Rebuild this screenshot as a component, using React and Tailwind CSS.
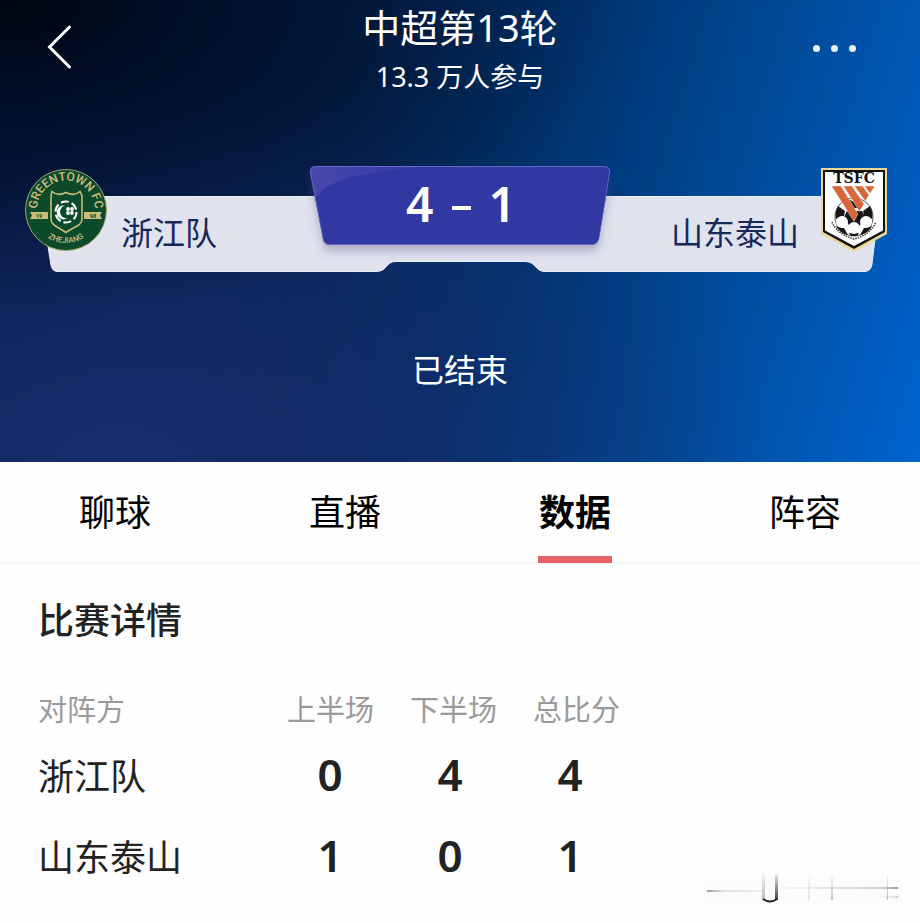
import React, { useState } from 'react';

const tabs = ['聊球', '直播', '数据', '阵容'];

const rows = [
    { team: '浙江队', scores: [0, 4, 4] },
    { team: '山东泰山', scores: [1, 0, 1] }
];

function GreentownCrest() {
    return (
        <svg className="w-[82px] h-[82px] shrink-0" viewBox="0 0 82 82" role="img" aria-label="Greentown FC">
            <defs>
                <path id="gt-top" d="M12.500 46 A29 29 0 1 1 69.500 46" />
                <path id="gt-bottom" d="M8 41 A33 33 0 0 0 74 41" />
            </defs>
            <circle cx="41" cy="41" r="40.5" fill="#0b4a2b" stroke="#a9a56c" strokeWidth="1" />
            <g fill="#cdbd7c" fontFamily="Roboto, sans-serif" fontWeight="500" textAnchor="middle">
                <text fontSize="12">
                    <textPath href="#gt-top" startOffset="50%">GREENTOWN FC</textPath>
                </text>
                <text fontSize="8">
                    <textPath href="#gt-bottom" startOffset="50%">ZHEJIANG</textPath>
                </text>
            </g>
            <path d="M5 43h18v7H5l2-3.500zM59 43h18l-2 3.500 2 3.500H59z" fill="#cdbd7c" />
            <g fill="#0b4a2b" fontFamily="Roboto, sans-serif" fontWeight="700" fontSize="5.500" textAnchor="middle">
                <text x="14" y="48.500">19</text>
                <text x="68" y="48.500">98</text>
            </g>
            <path
                d="M27 22.500C31 26 36 26 41 23.500C46 26 51 26 55 22.500L57 27V50C57 57 48 58 41 63.500C34 58 26 57 26 50V27Z"
                fill="#0b4a2b"
                stroke="#cdbd7c"
                strokeWidth="1.600"
            />
            <circle cx="41" cy="43" r="10.500" fill="none" stroke="#fff" strokeWidth="2" strokeDasharray="8 3" />
            <path d="M40 36.500a7 7 0 1 0 3 12.500a5.500 5.500 0 0 1-3-12.500z" fill="#fff" />
            <g fill="#fff">
                <circle cx="43" cy="40" r="1.900" />
                <circle cx="47" cy="40" r="1.900" />
                <circle cx="43" cy="44" r="1.900" />
                <circle cx="47" cy="44" r="1.900" />
            </g>
        </svg>
    );
}

function TaishanCrest() {
    return (
        <svg className="w-[66px] h-[84px] shrink-0" viewBox="0 0 66 84" role="img" aria-label="TSFC">
            <path d="M0 0H66V66L33 84L0 66Z" fill="#ecd894" />
            <path d="M2 2H64V64L33 81L2 64Z" fill="#111" />
            <path d="M4 4H62V62.500L33 78L4 62.500Z" fill="#fff" />
            <text
                x="33"
                y="15"
                fill="#111"
                fontFamily="'DejaVu Serif', serif"
                fontWeight="700"
                fontSize="14"
                textAnchor="middle"
            >
                TSFC
            </text>
            <circle cx="33" cy="49" r="19" fill="#fff" stroke="#222" strokeWidth="0.800" />
            <g fill="#161616">
                <path d="M26 43h15l4 8-7 7h-9l-7-7z" />
                <path d="M17 38l7 5-1 5-8 3c-1-5 0-9 2-13z" />
                <path d="M49 38l-7 5 1 5 8 3c1-5 0-9-2-13z" />
                <path d="M15 58l8 2 4 7c-6-1-10-5-12-9z" />
                <path d="M51 58l-8 2-4 7c6-1 10-5 12-9z" />
                <path d="M27 31l6 3 6-3-2 9h-8z" />
                <path d="M28 65h10l-2 3h-6z" />
            </g>
            <g fill="#fff">
                <circle cx="21" cy="54" r="6" />
                <circle cx="45" cy="54" r="6" />
                <circle cx="33" cy="60" r="6" />
            </g>
            <path d="M11 54Q16 66 33 71Q49 67 55 54" fill="none" stroke="#444" strokeWidth="1.600" strokeDasharray="1.500 1" />
            <g fill="#d9653a" stroke="#fff" strokeWidth="0.400">
                <path d="M10.500 18H20L37 46L33 53.500Z" />
                <path d="M22.500 18H31L43 36L38.500 43.500Z" />
                <path d="M33.500 18H41.500L48 27L44.300 33.300Z" />
                <path d="M43.500 18H54L49 25.500Z" />
            </g>
        </svg>
    );
}

function Scoreboard() {
    return (
        <div className="relative mt-[71px] flex h-[106px] justify-between pl-[25px] pr-[33px]">
            <svg className="absolute inset-0 h-full w-full" viewBox="0 0 920 106" preserveAspectRatio="none" aria-hidden="true">
                <defs>
                    <filter id="plate-shadow" x="-10%" y="-10%" width="120%" height="140%">
                        <feDropShadow dx="0" dy="6" stdDeviation="5" floodColor="#4a3f80" floodOpacity="0.350" />
                    </filter>
                    <clipPath id="plate-clip">
                        <path d="M316 0H604Q611 0 610 7L599 73Q597 79 591 79H330Q324 79 323 73L310 7Q309 0 316 0Z" />
                    </clipPath>
                    <linearGradient id="shine" x1="0" y1="0" x2="1" y2="0">
                        <stop offset="0" stopColor="#4a48ad" />
                        <stop offset="1" stopColor="#3138a2" />
                    </linearGradient>
                </defs>
                <path
                    d="M40 30.500H880L872 98Q871 105 865 105.500H545C535 105.500 536 95.500 525 95.500H396C385 95.500 388 105.500 376 105.500H57Q52 105 51 99Z"
                    fill="#e0e3ed"
                    stroke="#e8f1fb"
                />
                <path
                    d="M316 0H604Q611 0 610 7L599 73Q597 79 591 79H330Q324 79 323 73L310 7Q309 0 316 0Z"
                    fill="#3138a2"
                    filter="url(#plate-shadow)"
                />
                <g clipPath="url(#plate-clip)">
                    <path d="M300 0H440C360 6 330 12 316 32L300 40Z" fill="url(#shine)" />
                    <path
                        d="M316 0.500H604Q610.500 0.500 609.500 7L599 73Q597 78.500 591 78.500H330Q324 78.500 323 73L310.500 7Q309.500 0.500 316 0.500Z"
                        fill="none"
                        stroke="#6668c4"
                    />
                </g>
            </svg>
            <div className="relative flex flex-1 gap-[14px] pt-[3px]">
                <GreentownCrest />
                <span className="pt-[44px] text-[32px] leading-[40px] text-[#17285a]">浙江队</span>
            </div>
            <div className="absolute inset-x-0 top-0 flex h-[76px] items-center justify-center gap-[18px] pl-[2px] text-[48px] leading-[48px] font-semibold text-white">
                <span>4</span>
                <span className="mt-[8px] h-[4px] w-[19px] bg-white" />
                <span>1</span>
            </div>
            <div className="relative flex flex-1 justify-end gap-[22px] pt-[2px]">
                <span className="pt-[45px] text-[32px] leading-[40px] text-[#17285a]">山东泰山</span>
                <TaishanCrest />
            </div>
        </div>
    );
}

function Watermark() {
    return (
        <svg className="absolute right-[18px] bottom-[16px] h-[34px] w-[198px]" viewBox="0 0 198 34" aria-hidden="true">
            <defs>
                <linearGradient id="wm-fade" x1="0" y1="0" x2="0" y2="1">
                    <stop offset="0" stopColor="#222" stopOpacity="0.050" />
                    <stop offset="1" stopColor="#222" stopOpacity="0.850" />
                </linearGradient>
                <linearGradient id="wm-faint" x1="0" y1="0" x2="0" y2="1">
                    <stop offset="0" stopColor="#777" stopOpacity="0.050" />
                    <stop offset="1" stopColor="#777" stopOpacity="0.500" />
                </linearGradient>
                <linearGradient id="wm-left" x1="0" y1="0" x2="1" y2="0">
                    <stop offset="0" stopColor="#777" stopOpacity="0.700" />
                    <stop offset="0.300" stopColor="#777" stopOpacity="0.200" />
                    <stop offset="1" stopColor="#777" stopOpacity="0.100" />
                </linearGradient>
                <linearGradient id="wm-right" x1="0" y1="0" x2="1" y2="0">
                    <stop offset="0" stopColor="#777" stopOpacity="0.050" />
                    <stop offset="0.850" stopColor="#777" stopOpacity="0.300" />
                    <stop offset="1" stopColor="#777" stopOpacity="0.700" />
                </linearGradient>
            </defs>
            <rect x="0" y="2" width="198" height="30" fill="#fcfcfc" />
            <rect x="3" y="17" width="55" height="2" fill="url(#wm-left)" />
            <rect x="76" y="14" width="118" height="2" fill="url(#wm-right)" />
            <rect x="176" y="23" width="18" height="2" fill="url(#wm-right)" opacity="0.600" />
            <rect x="58" y="0" width="3" height="27" fill="url(#wm-faint)" />
            <rect x="71" y="0" width="3" height="27" fill="url(#wm-fade)" />
            <path d="M59 26Q66 31 73 26" fill="none" stroke="#222" strokeWidth="2" />
            <rect x="104" y="2" width="2" height="25" fill="url(#wm-faint)" opacity="0.350" />
            <rect x="127" y="2" width="2" height="25" fill="url(#wm-faint)" opacity="0.800" />
            <rect x="183" y="2" width="1" height="25" fill="url(#wm-faint)" />
        </svg>
    );
}

export default function App() {
    const [active, setActive] = useState('数据');

    return (
        <div className="relative min-h-screen bg-[#fefefe] font-['Noto_Sans','Noto_Sans_CJK_SC',sans-serif] text-[#222]">
            <header className="h-[462px] bg-[radial-gradient(ellipse_at_0%_0%,#000611_0%,#000b22b3_18%,transparent_48%),radial-gradient(ellipse_at_12%_100%,#182c6c_0%,#182c6c99_28%,transparent_58%),linear-gradient(107deg,#03163d_0%,#04234f_36%,#00326c_55%,#004a98_75%,#0057b4_88%,#0064d0_100%)] text-white">
                <div className="flex items-start justify-between px-[46px]">
                    <button aria-label="返回" className="mt-[24px] h-[46px] w-[62px]">
                        <svg className="h-[46px] w-[26px]" viewBox="0 0 26 46" fill="none" stroke="#fff" strokeWidth="3" strokeLinecap="round">
                            <path d="M23.500 3L3.500 23L23.500 43" />
                        </svg>
                    </button>
                    <div className="text-center">
                        <h1 className="pt-[3px] text-[38px] leading-[48px]">中超第13轮</h1>
                        <p className="mt-[8px] text-[27px] leading-[35px]">13.3 万人参与</p>
                    </div>
                    <button aria-label="更多" className="mt-[36px] flex h-[24px] w-[62px] items-center justify-end gap-[11px] pr-[18px]">
                        <span className="h-[7px] w-[7px] shrink-0 rounded-full bg-[#e2f5ff]" />
                        <span className="h-[7px] w-[7px] shrink-0 rounded-full bg-[#e2f5ff]" />
                        <span className="h-[7px] w-[7px] shrink-0 rounded-full bg-[#e2f5ff]" />
                    </button>
                </div>
                <div className="pt-px">
                    <Scoreboard />
                </div>
                <p className="mt-[78px] text-center text-[32px] leading-[40px]">已结束</p>
            </header>

            <nav className="grid h-[102px] grid-cols-4 border-b-2 border-[#f5f5f5] text-[36px] text-black">
                {tabs.map(tab => (
                    <button
                        key={tab}
                        onClick={() => setActive(tab)}
                        className={`relative pt-[2px] leading-[44px] ${active === tab ? 'font-bold' : ''}`}
                    >
                        {tab}
                        {active === tab && <span className="absolute bottom-[-1px] left-1/2 h-[7px] w-[74px] -translate-x-1/2 bg-[#e66265]" />}
                    </button>
                ))}
            </nav>

            <main className="px-[38px] pt-[35px]">
                <h2 className="text-[36px] leading-[44px] font-medium">比赛详情</h2>
                <table className="mt-[45px] block">
                    <thead className="block">
                        <tr className="grid grid-cols-[231px_123px_123px_123px] text-[29px] leading-[44px] text-[#9a9a9a]">
                            <th className="text-left font-normal">对阵方</th>
                            <th className="font-normal">上半场</th>
                            <th className="font-normal">下半场</th>
                            <th className="font-normal">总比分</th>
                        </tr>
                    </thead>
                    <tbody className="block pt-[4px]">
                        {rows.map(row => (
                            <tr key={row.team} className="grid h-[81px] grid-cols-[232px_120px_120px_120px] items-center">
                                <th className="text-left text-[36px] leading-[44px] font-normal">{row.team}</th>
                                {row.scores.map((score, i) => (
                                    <td key={i} className="pb-[6px] text-center text-[44px] leading-[44px] font-semibold">{score}</td>
                                ))}
                            </tr>
                        ))}
                    </tbody>
                </table>
            </main>
            <Watermark />
        </div>
    );
}
